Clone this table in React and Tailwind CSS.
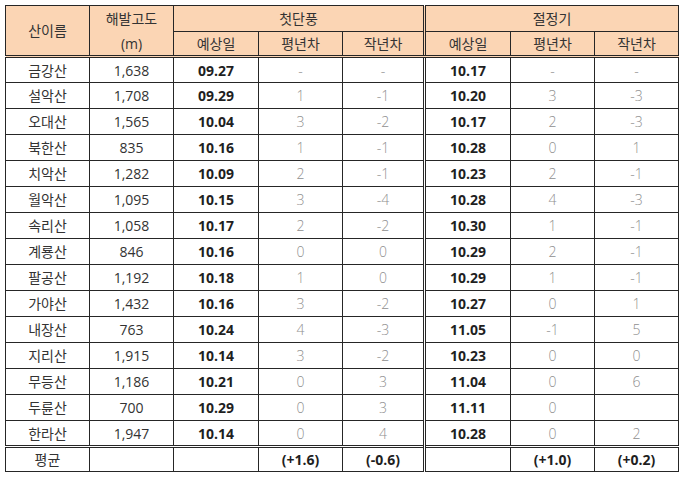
const rows = [
  ["금강산", "1,638", "09.27", "-", "-", "10.17", "-", "-"],
  ["설악산", "1,708", "09.29", "1", "-1", "10.20", "3", "-3"],
  ["오대산", "1,565", "10.04", "3", "-2", "10.17", "2", "-3"],
  ["북한산", "835", "10.16", "1", "-1", "10.28", "0", "1"],
  ["치악산", "1,282", "10.09", "2", "-1", "10.23", "2", "-1"],
  ["월악산", "1,095", "10.15", "3", "-4", "10.28", "4", "-3"],
  ["속리산", "1,058", "10.17", "2", "-2", "10.30", "1", "-1"],
  ["계룡산", "846", "10.16", "0", "0", "10.29", "2", "-1"],
  ["팔공산", "1,192", "10.18", "1", "0", "10.29", "1", "-1"],
  ["가야산", "1,432", "10.16", "3", "-2", "10.27", "0", "1"],
  ["내장산", "763", "10.24", "4", "-3", "11.05", "-1", "5"],
  ["지리산", "1,915", "10.14", "3", "-2", "10.23", "0", "0"],
  ["무등산", "1,186", "10.21", "0", "3", "11.04", "0", "6"],
  ["두륜산", "700", "10.29", "0", "3", "11.11", "0", ""],
  ["한라산", "1,947", "10.14", "0", "4", "10.28", "0", "2"],
];

const cell = "border border-[#262626] text-center align-middle p-0";
const dbl = "border-l-[3px] [border-left-style:double]";
const under = "border-b-[3px] [border-bottom-style:double]";
const over = "border-t-[3px] [border-top-style:double]";
const num = "font-['Open_Sans'] text-[14px]";
const bold = `${num} font-bold text-[#1f1f1f]`;
const gray = `${num} font-light text-[#8f8f8f]`;

export default function App() {
  return (
    <div
      className="bg-white w-[682px] h-[479px] pl-[5px] pt-[5px]"
      style={{ fontFamily: '"Noto Sans CJK KR", "Open Sans", sans-serif' }}
    >
      <table className="table-fixed border-collapse w-[673px] text-[14px] text-[#333]">
        <colgroup>
          <col className="w-[84px]" />
          <col className="w-[84px]" />
          <col className="w-[85px]" />
          <col className="w-[84px]" />
          <col className="w-[82px]" />
          <col className="w-[86px]" />
          <col className="w-[84px]" />
          <col className="w-[84px]" />
        </colgroup>
        <thead className="bg-[#fbd5b4]">
          <tr className="h-[26px]">
            <th rowSpan={2} className={`${cell} font-normal ${under}`}>
              산이름
            </th>
            <th className={`${cell} font-normal border-b-0`}>해발고도</th>
            <th colSpan={3} className={`${cell} font-normal`}>첫단풍</th>
            <th colSpan={3} className={`${cell} font-normal ${dbl}`}>절정기</th>
          </tr>
          <tr className="h-[25px]">
            <th className={`${cell} font-normal border-t-0 ${under} ${num}`}>(m)</th>
            <th className={`${cell} font-normal ${under}`}>예상일</th>
            <th className={`${cell} font-normal ${under}`}>평년차</th>
            <th className={`${cell} font-normal ${under}`}>작년차</th>
            <th className={`${cell} font-normal ${under} ${dbl}`}>예상일</th>
            <th className={`${cell} font-normal ${under}`}>평년차</th>
            <th className={`${cell} font-normal ${under}`}>작년차</th>
          </tr>
        </thead>
        <tbody>
          {rows.map((r) => (
            <tr key={r[0]} className="h-[26px]">
              <td className={cell}>{r[0]}</td>
              <td className={`${cell} ${num}`}>{r[1]}</td>
              <td className={`${cell} ${bold}`}>{r[2]}</td>
              <td className={`${cell} ${gray}`}>{r[3]}</td>
              <td className={`${cell} ${gray}`}>{r[4]}</td>
              <td className={`${cell} ${dbl} ${bold}`}>{r[5]}</td>
              <td className={`${cell} ${gray}`}>{r[6]}</td>
              <td className={`${cell} ${gray}`}>{r[7]}</td>
            </tr>
          ))}
          <tr className="h-[25px]">
            <td className={`${cell} ${over}`}>평균</td>
            <td className={`${cell} ${over}`}></td>
            <td className={`${cell} ${over}`}></td>
            <td className={`${cell} ${over} ${bold}`}>(+1.6)</td>
            <td className={`${cell} ${over} ${bold}`}>(-0.6)</td>
            <td className={`${cell} ${over} ${dbl}`}></td>
            <td className={`${cell} ${over} ${bold}`}>(+1.0)</td>
            <td className={`${cell} ${over} ${bold}`}>(+0.2)</td>
          </tr>
        </tbody>
      </table>
    </div>
  );
}
